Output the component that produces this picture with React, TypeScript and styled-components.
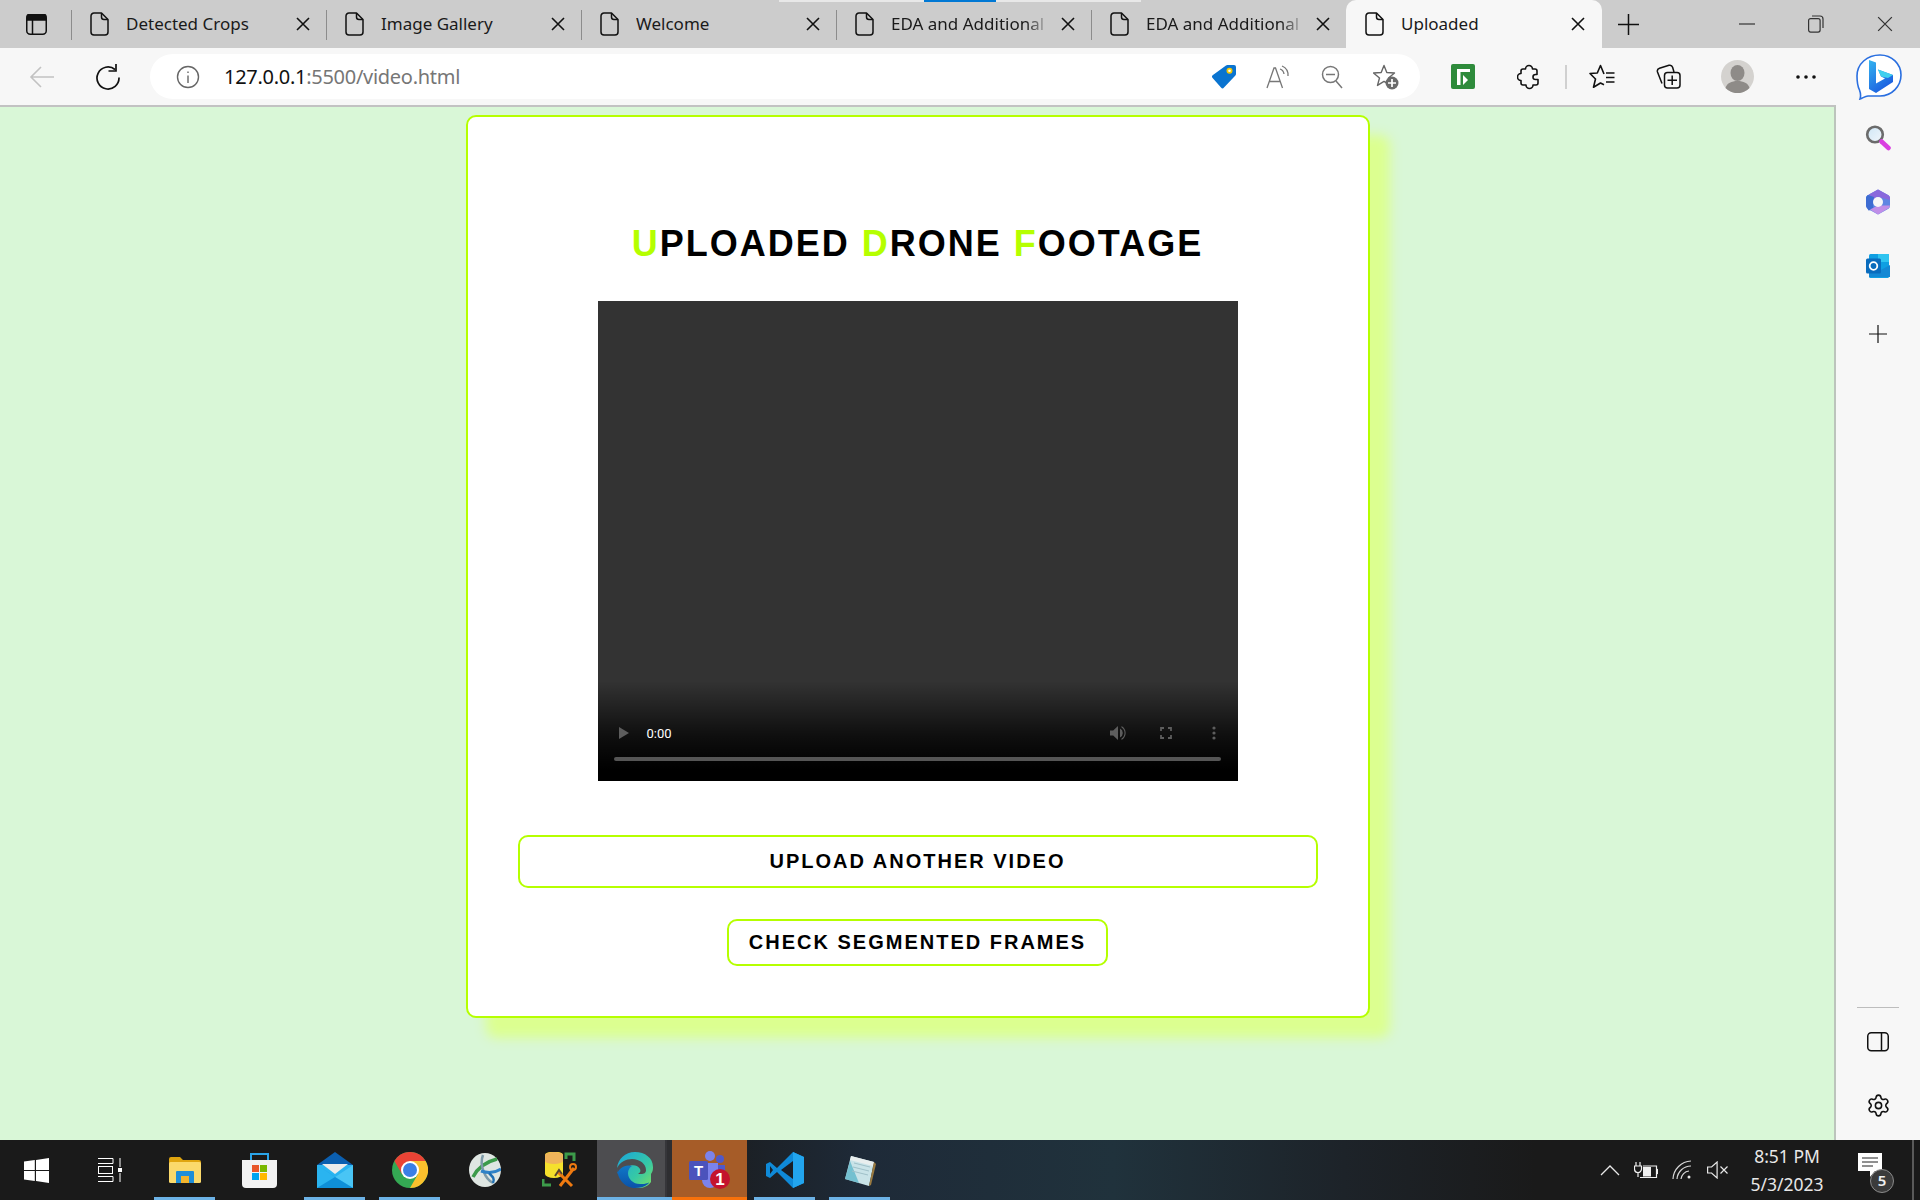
import React from "react";
import styled, { createGlobalStyle } from "styled-components";
import { Settings } from "lucide-react";

const LIME = "#b5ff00";
const UI_FONT = `"Noto Sans", "Open Sans", sans-serif`;
const PAGE_FONT = `"Liberation Sans", Arial, sans-serif`;

const Global = createGlobalStyle`
  html, body { margin: 0; padding: 0; height: 1200px; overflow: hidden; }
  * { box-sizing: border-box; }
  svg { display: block; flex: none; }
`;

const Screen = styled.div`
  position: relative;
  width: 1920px;
  height: 1200px;
  display: flex;
  flex-direction: column;
  background: #f7f7f7;
  font-family: ${UI_FONT};
`;

/* ---------- tab strip ---------- */
const TabStrip = styled.div`
  height: 48px;
  flex: none;
  display: flex;
  align-items: stretch;
  background: #cccccc;
`;
const TopGlint = styled.div`
  position: absolute;
  left: 779px;
  top: 0;
  width: 362px;
  height: 2px;
  background: #e8e8e8;
  display: flex;
  justify-content: center;
`;
const TopGlintBlue = styled.div`
  width: 72px;
  height: 2px;
  background: #0078d4;
`;
const TabMenu = styled.div`
  width: 71px;
  flex: none;
  display: flex;
  align-items: center;
  padding-left: 26px;
`;
const Tab = styled.div<{ $active?: boolean }>`
  position: relative;
  width: ${(p) => (p.$active ? 256 : 255)}px;
  flex: none;
  display: flex;
  align-items: center;
  padding: 0 15px 0 19px;
  background: ${(p) => (p.$active ? "#f7f7f7" : "transparent")};
  border-radius: ${(p) => (p.$active ? "10px 10px 0 0" : "0")};
  &::before {
    content: "";
    position: absolute;
    left: 0;
    top: 10px;
    width: 1px;
    height: 30px;
    background: ${(p) => (p.$active ? "transparent" : "#8c8c8c")};
  }
`;
const TabTitle = styled.span<{ $fade?: boolean }>`
  width: 153px;
  margin-left: 17px;
  margin-right: 17px;
  font-size: 17px;
  line-height: 24px;
  color: #1a1a1a;
  white-space: nowrap;
  overflow: hidden;
  margin-top: -1px;
  ${(p) => (p.$fade ? "mask-image: linear-gradient(to right, #000 88%, rgba(0,0,0,.25) 100%);" : "")}
`;
const PlusSlot = styled.div`
  width: 52px;
  flex: none;
  display: flex;
  align-items: center;
  justify-content: center;
`;
const WindowControls = styled.div`
  margin-left: auto;
  padding-right: 1px;
  display: flex;
`;
const WindowButton = styled.div`
  width: 69px;
  display: flex;
  align-items: center;
  justify-content: center;
`;

/* ---------- toolbar ---------- */
const Toolbar = styled.div`
  height: 57px;
  flex: none;
  display: flex;
  align-items: center;
  padding-left: 9px;
  background: #f7f7f7;
`;
const ToolSlot = styled.div<{ $w?: number }>`
  width: ${(p) => p.$w ?? 66}px;
  height: 45px;
  flex: none;
  display: flex;
  align-items: center;
  justify-content: center;
`;
const AddressBar = styled.div`
  width: 1270px;
  height: 45px;
  margin: 0 10px 0 9px;
  flex: none;
  display: flex;
  align-items: center;
  padding: 0 7px 0 16px;
  background: #ffffff;
  border-radius: 23px;
`;
const Url = styled.div`
  flex: 1;
  margin-left: 14px;
  font-size: 20px;
  letter-spacing: -0.28px;
  color: #767676;
`;
const UrlHost = styled.span`
  color: #111111;
`;
const ToolDivider = styled.div`
  width: 2px;
  height: 24px;
  background: #d0d0d0;
`;

/* ---------- page ---------- */
const Body = styled.div`
  flex: 1;
  display: flex;
  min-height: 0;
`;
const Page = styled.main`
  width: 1836px;
  flex: none;
  padding: 8px 0 0 1px;
  display: flex;
  justify-content: center;
  align-items: flex-start;
  background: #d9f7d7;
  border-top: 2px solid #c2c2c2;
  border-right: 2px solid #bcc4bc;
`;
const Card = styled.section`
  width: 904px;
  height: 903px;
  display: flex;
  flex-direction: column;
  align-items: center;
  padding-top: 106px;
  background: #ffffff;
  border: 2px solid ${LIME};
  border-radius: 10px;
  box-shadow: 20px 20px 12px #dcff90;
  font-family: ${PAGE_FONT};
`;
const Title = styled.h1`
  margin: 0 0 36px;
  font-size: 36px;
  line-height: 42px;
  font-weight: 700;
  letter-spacing: 2px;
  color: #000000;
`;
const Initial = styled.span`
  color: ${LIME};
`;
const Video = styled.div`
  width: 640px;
  height: 480px;
  flex: none;
  display: flex;
  flex-direction: column;
  justify-content: flex-end;
  background: #333333;
`;
const VideoPanel = styled.div`
  height: 100px;
  display: flex;
  flex-direction: column;
  justify-content: flex-end;
  padding: 0 17px 20px 16px;
  background: linear-gradient(to bottom, rgba(0, 0, 0, 0), rgba(0, 0, 0, 0.72) 55%, #000 88%);
`;
const VideoRow = styled.div`
  display: flex;
  align-items: center;
  height: 24px;
  margin: 0 -17px 12px 0;
  padding-left: 5px;
`;
const VideoTime = styled.span`
  margin-left: 18px;
  font-family: Roboto, ${PAGE_FONT};
  font-size: 13px;
  color: #ffffff;
`;
const VideoRight = styled.div`
  margin-left: auto;
  display: flex;
  align-items: center;
`;
const VideoSlot = styled.div`
  width: 48px;
  display: flex;
  justify-content: center;
`;
const VideoProgress = styled.div`
  height: 4px;
  border-radius: 2px;
  background: #555555;
`;
const ActionButton = styled.button<{ $wide?: boolean }>`
  width: ${(p) => (p.$wide ? 800 : 381)}px;
  height: ${(p) => (p.$wide ? 53 : 47)}px;
  margin-top: ${(p) => (p.$wide ? 54 : 31)}px;
  flex: none;
  padding: 0;
  background: #ffffff;
  border: 2px solid ${LIME};
  border-radius: 10px;
  font-family: ${PAGE_FONT};
  font-size: 20px;
  font-weight: 700;
  letter-spacing: 2px;
  color: #000000;
`;

/* ---------- sidebar ---------- */
const Sidebar = styled.aside`
  width: 84px;
  flex: none;
  display: flex;
  flex-direction: column;
  padding: 1px 0 3px;
  background: #f7f7f7;
`;
const SideSlot = styled.div<{ $h?: number }>`
  height: ${(p) => p.$h ?? 64}px;
  flex: none;
  display: flex;
  align-items: center;
  justify-content: center;
`;
const SideDivider = styled.div`
  height: 1px;
  margin: auto 21px 2px 21px;
  background: #bdbdbd;
`;

/* ---------- taskbar ---------- */
const Taskbar = styled.footer`
  height: 60px;
  flex: none;
  display: flex;
  align-items: stretch;
  background: linear-gradient(to right, #1a1a1a 0%, #1a1a1a 35%, #1e2a38 45%, #20323c 58%, #1d2329 70%, #1a1a1a 80%);
`;
const TaskSlot = styled.div<{ $w?: number; $mark?: string; $bg?: string; $full?: boolean }>`
  position: relative;
  width: ${(p) => p.$w ?? 75}px;
  flex: none;
  display: flex;
  align-items: center;
  justify-content: center;
  background: ${(p) => p.$bg ?? "transparent"};
  &::after {
    content: "";
    display: ${(p) => (p.$mark ? "block" : "none")};
    position: absolute;
    bottom: 0;
    left: ${(p) => (p.$full ? 0 : 7)}px;
    right: ${(p) => (p.$full ? 0 : 7)}px;
    height: 3px;
    background: ${(p) => p.$mark};
  }
`;
const Tray = styled.div`
  margin-left: auto;
  display: flex;
  align-items: stretch;
`;
const TraySlot = styled.div<{ $w: number }>`
  width: ${(p) => p.$w}px;
  display: flex;
  align-items: center;
  justify-content: center;
`;
const Clock = styled.div`
  width: 100px;
  display: flex;
  flex-direction: column;
  align-items: center;
  justify-content: center;
  gap: 6px;
  margin-left: 3px;
  font-size: 17.5px;
  line-height: 22px;
  color: #e8e8e8;
`;
const NotifySlot = styled.div`
  position: relative;
  width: 77px;
  height: 60px;
  margin-right: 6px;
  padding: 0 0 10px 21px;
  display: flex;
  align-items: center;
  border-right: 2px solid #5a5a5a;
`;
const NotifyBadge = styled.span`
  position: absolute;
  left: 33px;
  top: 29px;
  width: 24px;
  height: 24px;
  border-radius: 50%;
  background: #3b3b3b;
  border: 1px solid #8a8a8a;
  color: #f0f0f0;
  font-size: 15px;
  font-weight: 600;
  line-height: 21px;
  text-align: center;
`;

/* ---------- drawings ---------- */
const FileIcon = () => (
  <svg width="19" height="24" viewBox="0 0 19 24" fill="none" stroke="#111" strokeWidth="1.5" strokeLinejoin="round">
    <path d="M4 1h7.5L18 7.5V20a3 3 0 0 1-3 3H4a3 3 0 0 1-3-3V4a3 3 0 0 1 3-3z" />
    <path d="M11.5 1v4a2.5 2.5 0 0 0 2.5 2.5h4" />
  </svg>
);
const CloseIcon = ({ s = 14, c = "#111", w = 1.6 }: { s?: number; c?: string; w?: number }) => (
  <svg width={s} height={s} viewBox="0 0 14 14" stroke={c} strokeWidth={w}>
    <path d="M1 1l12 12M13 1L1 13" />
  </svg>
);
const TabsMenuIcon = () => (
  <svg width="21" height="21" viewBox="0 0 21 21" fill="none" stroke="#111" strokeWidth="1.5">
    <rect x="0.75" y="0.75" width="19.5" height="19.5" rx="3.5" />
    <path d="M1 2.5a2 2 0 0 1 2-2h15a2 2 0 0 1 2 2V6H1z" fill="#111" />
    <path d="M6.5 6v14" />
  </svg>
);
const PlusIcon = ({ s = 21, w = 1.5 }: { s?: number; w?: number }) => (
  <svg width={s} height={s} viewBox="0 0 21 21" stroke="#111" strokeWidth={w}>
    <path d="M10.5 0v21M0 10.5h21" />
  </svg>
);
const BackIcon = () => (
  <svg width="26" height="24" viewBox="0 0 26 24" fill="none" stroke="#c2c2c2" strokeWidth="1.6">
    <path d="M25 12H2M12 2L2 12l10 10" />
  </svg>
);
const ReloadIcon = () => (
  <svg width="26" height="26" viewBox="0 0 26 26" fill="none" stroke="#111" strokeWidth="1.7">
    <path d="M20 5.5a11 11 0 1 0 4 8" />
    <path d="M13.5 6h7.5V-1" transform="translate(0 1)" />
  </svg>
);
const InfoIcon = () => (
  <svg width="24" height="24" viewBox="0 0 24 24" fill="none" stroke="#666" strokeWidth="1.4">
    <circle cx="12" cy="12" r="10.5" />
    <path d="M12 10.5V18M12 6.5v1.6" />
  </svg>
);
const TagIcon = () => (
  <svg width="26" height="25" viewBox="0 0 26 25">
    <path d="M15 1.5a2 2 0 0 1 1.4-.5H23a2 2 0 0 1 2 2v7a2 2 0 0 1-.6 1.4L13 23.6a2 2 0 0 1-3 0L1.6 14a2 2 0 0 1 0-2.8z" fill="#0a74d0" />
    <circle cx="18.5" cy="6.8" r="3" fill="#f6c800" />
    <circle cx="18.5" cy="6.8" r="1.3" fill="#fff" />
  </svg>
);
const ReadIcon = () => (
  <svg width="24" height="24" viewBox="0 0 24 24" fill="none" stroke="#777" strokeWidth="1.3">
    <path d="M1 23L8 3h1.5l7 20M3.5 16.5h10.5" />
    <path d="M14 4a6 6 0 0 1 4 5M16 1a10 10 0 0 1 6 10" />
  </svg>
);
const ZoomOutIcon = () => (
  <svg width="22" height="24" viewBox="0 0 22 24" fill="none" stroke="#777" strokeWidth="1.5">
    <circle cx="9.5" cy="9.5" r="8" />
    <path d="M5 9.5h9M15 16l6 7" />
  </svg>
);
const StarAddIcon = () => (
  <svg width="26" height="26" viewBox="0 0 26 26" fill="none">
    <path d="M11 1.5l2.8 7 7.7.5-6 5 2 7.4-6.5-4-6.5 4 2-7.4-6-5 7.7-.5z" stroke="#666" strokeWidth="1.4" strokeLinejoin="round" />
    <circle cx="19" cy="19" r="6.5" fill="#6a6a6a" />
    <path d="M19 15v8M15 19h8" stroke="#fff" strokeWidth="1.7" />
  </svg>
);
const GreenExtIcon = () => (
  <svg width="24" height="25" viewBox="0 0 24 25">
    <rect width="24" height="25" rx="2" fill="#2e8b3b" />
    <path d="M6 21V5h13v3H9.5v13z" fill="#fff" />
    <path d="M12 11l5 5-5 5z" fill="#fff" />
  </svg>
);
const PuzzleIcon = () => (
  <svg width="24" height="26" viewBox="0 0 24 26" fill="none" stroke="#111" strokeWidth="1.6" strokeLinejoin="round">
    <path d="M6 5h2.500a3.500 3.500 0 0 1 7 0H18a2 2 0 0 1 2 2v3.500h-1.500a2.500 2.500 0 0 0 0 5H21V19a2 2 0 0 1-2 2h-3a3.500 3.500 0 0 1-7 0H6a2 2 0 0 1-2-2v-2.500a3.500 3.500 0 0 1 0-7V7a2 2 0 0 1 2-2z" />
  </svg>
);
const FavoritesIcon = () => (
  <svg width="26" height="25" viewBox="0 0 26 25" fill="none" stroke="#111" strokeWidth="1.6" strokeLinejoin="round">
    <path d="M15 10L11.500 1.500 8.300 9 1 9.500 6.500 15l-2 8.300 7-4.300 3.500 1.800" />
    <path d="M17 9h8.500M17 13.500h8.500M17 18h8.500" />
  </svg>
);
const CollectionsIcon = () => (
  <svg width="25" height="25" viewBox="0 0 25 25" fill="none" stroke="#111" strokeWidth="1.5">
    <path d="M6 19.500L1.500 8a3 3 0 0 1 2-3.700L13 1.300a3 3 0 0 1 3.600 2L18 8" />
    <rect x="8.500" y="8.500" width="15.500" height="15.500" rx="3" />
    <path d="M16.200 11.500v9.500M11.500 16.200H21" />
  </svg>
);
const ProfileIcon = () => (
  <svg width="33" height="33" viewBox="0 0 33 33">
    <circle cx="16.5" cy="16.5" r="16.5" fill="#d4d2cf" />
    <ellipse cx="16.5" cy="13" rx="7" ry="8" fill="#8e8b88" />
    <path d="M4.5 28c1.5-5 6-7 12-7s10.500 2 12 7a16.500 16.500 0 0 1-24 0z" fill="#8e8b88" />
  </svg>
);
const DotsIcon = () => (
  <svg width="20" height="4" viewBox="0 0 20 4" fill="#111">
    <circle cx="2" cy="2" r="1.8" />
    <circle cx="10" cy="2" r="1.8" />
    <circle cx="18" cy="2" r="1.8" />
  </svg>
);
const BingIcon = () => (
  <svg width="46" height="46" viewBox="0 0 46 46">
    <defs>
      <linearGradient id="bingB" x1="0" y1="0" x2="0.6" y2="1">
        <stop offset="0" stopColor="#34b4ef" />
        <stop offset="1" stopColor="#1a5be0" />
      </linearGradient>
    </defs>
    <path d="M24 1c12 0 21 9 21 20s-9 21-21 21H12c-3 0-5 2-8 3 1-3 1-5-.5-9C1.500 32 1 27 1 22 1 10 11 1 24 1z" fill="#fff" stroke="#2a6fe0" strokeWidth="1.6" />
    <path d="M13 6l7 2.500v21l9-5-4-2-3-7 15 5.500v7L20 39l-7-4z" fill="url(#bingB)" />
    <path d="M22 15.500l15 5.500-5 3-7-1.500z" fill="#3fd0ee" />
  </svg>
);
const SearchSideIcon = () => (
  <svg width="26" height="26" viewBox="0 0 26 26">
    <defs>
      <linearGradient id="lens" x1="0" y1="0" x2="1" y2="1">
        <stop offset="0" stopColor="#cfe6f6" />
        <stop offset="1" stopColor="#f2f7fb" />
      </linearGradient>
    </defs>
    <circle cx="10" cy="9.500" r="7.800" fill="url(#lens)" stroke="#6b6b6b" strokeWidth="2.600" />
    <path d="M16.500 16.500l7 6.500" stroke="#d93ee0" strokeWidth="4.500" strokeLinecap="round" />
  </svg>
);
const CopilotIcon = () => (
  <svg width="24" height="26" viewBox="0 0 24 26">
    <path d="M12 0.500l10 5.500c1 .6 2 1.500 2 3v8c0 1.500-1 2.400-2 3l-10 5.500-10-5.500c-1-.6-2-1.500-2-3V9c0-1.500 1-2.400 2-3z" fill="#5f86e2" />
    <path d="M12 0.500l10 5.500c1 .6 2 1.500 2 3v2L12 8 7 11 3 5.500z" fill="#8a68dc" />
    <path d="M0 9c0-1.500 1-2.400 2-3l6 2-1 9 1 3.500-5.500 1L0 17z" fill="#3d6cd2" />
    <path d="M4 20.500l8-4 12 0c0 1.500-1 2.300-2 3l-10 6z" fill="#c08fe8" />
    <circle cx="12" cy="13" r="5" fill="#f7f7f7" />
  </svg>
);
const OutlookIcon = () => (
  <svg width="24" height="24" viewBox="0 0 24 24">
    <rect x="3" y="0" width="20" height="24" rx="1.500" fill="#0f9fe2" />
    <rect x="12" y="0" width="11" height="8" fill="#2fc4f0" />
    <path d="M3 12l10 5 11-6v12H3z" fill="#1488d4" />
    <rect x="0" y="4.500" width="15" height="15" rx="1.500" fill="#0a6cbd" />
    <circle cx="7.500" cy="12" r="3.800" fill="none" stroke="#fff" strokeWidth="1.800" />
  </svg>
);
const PanelIcon = () => (
  <svg width="22" height="20" viewBox="0 0 22 20" fill="none" stroke="#111" strokeWidth="1.500">
    <rect x="0.750" y="0.750" width="20.500" height="18" rx="3.500" />
    <path d="M14.500 1v18" />
  </svg>
);
const WinLogo = () => (
  <svg width="25" height="25" viewBox="0 0 25 25" fill="#fff">
    <path d="M0 3.600l10.800-1.500v9.900H0zM12 1.900L25 0v12H12zM0 13h10.800v9.900L0 21.400zM12 13h13v12l-13-1.900z" />
  </svg>
);
const TaskViewIcon = () => (
  <svg width="24" height="24" viewBox="0 0 24 24" fill="none" stroke="#fff" strokeWidth="1">
    <path d="M0 0.500h15v5H0M0 23.500h15v-5H0" />
    <rect x="0.500" y="8.500" width="14" height="7" />
    <path d="M22 0v9M22 15v9" />
    <rect x="20" y="10" width="4" height="4" fill="#fff" stroke="none" />
  </svg>
);
const ExplorerIcon = () => (
  <svg width="32" height="26" viewBox="0 0 32 26">
    <path d="M0 2a2 2 0 0 1 2-2h9l3 3h16a2 2 0 0 1 2 2v3H0z" fill="#e0a50f" />
    <rect x="0" y="5" width="32" height="21" rx="1.500" fill="#fbd96b" />
    <path d="M7 26V15a1 1 0 0 1 1-1h16a1 1 0 0 1 1 1v11h-5v-7h-8v7z" fill="#1f8ed8" />
    <rect x="12" y="19" width="8" height="7" fill="#f3b42c" />
  </svg>
);
const StoreIcon = () => (
  <svg width="35" height="36" viewBox="0 0 35 36">
    <path d="M9 8V2h17v6" fill="none" stroke="#2aa4e8" strokeWidth="2" />
    <path d="M0 8h35v24a4 4 0 0 1-4 4H4a4 4 0 0 1-4-4z" fill="#f2f2f2" />
    <rect x="10" y="13" width="7" height="7" fill="#e8562a" />
    <rect x="18" y="13" width="7" height="7" fill="#7ab800" />
    <rect x="10" y="21" width="7" height="7" fill="#00a4ef" />
    <rect x="18" y="21" width="7" height="7" fill="#ffb900" />
  </svg>
);
const MailIcon = () => (
  <svg width="36" height="36" viewBox="0 0 36 36">
    <path d="M18 0l18 13H0z" fill="#0b5fb0" />
    <path d="M0 13h36v23H0z" fill="#2ab4f0" />
    <path d="M5 12h26L18 22z" fill="#ececec" />
    <path d="M0 13l18 12 18-12v23z" fill="#1fa6ea" />
    <path d="M18 25l18 11V13z" fill="#49c5f5" />
    <path d="M0 36l18-11 18 11z" fill="#0f8fd8" />
  </svg>
);
const ChromeIcon = () => (
  <svg width="36" height="36" viewBox="0 0 36 36">
    <circle cx="18" cy="18" r="18" fill="#34a853" />
    <path d="M2.400 9A18 18 0 0 1 33.600 9H18L10.200 22.500z" fill="#ea4335" />
    <path d="M33.600 9A18 18 0 0 1 18 36l7.800-13.500L18 9z" fill="#fbc02d" />
    <circle cx="18" cy="18" r="9" fill="#fff" />
    <circle cx="18" cy="18" r="7" fill="#3b7fe6" />
  </svg>
);
const GlobeIcon = () => (
  <svg width="32" height="34" viewBox="0 0 32 34" fill="none">
    <ellipse cx="16" cy="17" rx="16" ry="17" fill="#dfe6e2" />
    <path d="M4 24C10 12 20 8 28 6" stroke="#3c9b4a" strokeWidth="3.500" />
    <path d="M14 2c-4 10 2 24 10 28" stroke="#7d9aa8" strokeWidth="2.500" />
    <path d="M12 18c6 2 14 2 20-2" stroke="#2f82c7" strokeWidth="3" />
    <path d="M20 20c4 4 6 6 4 10" stroke="#1f6fb3" strokeWidth="2.500" />
  </svg>
);
const ToolsIcon = () => (
  <svg width="36" height="36" viewBox="0 0 36 36" fill="none">
    <path d="M3 3a8 3 0 0 1 18 0v19a9 4 0 0 1-18 0z" fill="#f5e02c" />
    <path d="M3 3a9 3 0 0 1 18 0v6a9 3 0 0 1-18 0z" fill="#efb45a" />
    <path d="M24 7V2h8v7" stroke="#3c9b4a" strokeWidth="3" />
    <path d="M1 27v6h8" stroke="#3c9b4a" strokeWidth="3" />
    <path d="M16 20l14 14M32 16L18 34" stroke="#ef7a10" strokeWidth="3" />
    <path d="M13 24l4-6 3 4" stroke="#5a4630" strokeWidth="2" />
    <circle cx="31" cy="15" r="3" stroke="#ef7a10" strokeWidth="2" />
  </svg>
);
const EdgeIcon = () => (
  <svg width="36" height="36" viewBox="0 0 36 36">
    <defs>
      <linearGradient id="edgeTop" x1="0" y1="0" x2="1" y2="1">
        <stop offset="0" stopColor="#1aa5dc" />
        <stop offset="0.6" stopColor="#36c9a5" />
        <stop offset="1" stopColor="#7fe05f" />
      </linearGradient>
      <linearGradient id="edgeLow" x1="0" y1="0" x2="0" y2="1">
        <stop offset="0" stopColor="#0f78c8" />
        <stop offset="1" stopColor="#0b52a8" />
      </linearGradient>
    </defs>
    <path d="M18 0C8 0 1 7 0 16c3-6 9-9 15-9 8 0 14 5 14 11 0 3-2 4-5 4h-3c2-1 3-3 2-5-2-4-8-5-13-2C6 18 4 24 7 29c3 5 9 7 14 7 6 0 10-2 13-6V22c2-3 2-5 2-7C36 6 28 0 18 0z" fill="url(#edgeTop)" />
    <path d="M0 16c0 10 7 20 18 20 5 0 9-1 13-4 1-1 1-2 0-1-3 1-5 1-8 1-7 0-12-5-12-11 0-3 2-6 4-7C8 12 2 16 0 22z" fill="url(#edgeLow)" />
  </svg>
);
const TeamsIcon = () => (
  <svg width="42" height="38" viewBox="0 0 42 38">
    <circle cx="21" cy="5" r="5" fill="#7b83eb" />
    <circle cx="31" cy="8" r="4" fill="#5059c9" />
    <path d="M27 14h9v13a5 5 0 0 1-9 0z" fill="#5059c9" />
    <path d="M13 12h16v17a8 8 0 0 1-16 0z" fill="#7b83eb" />
    <rect x="0" y="10" width="19" height="19" rx="1.500" fill="#4b53bc" />
    <text x="9.500" y="25" textAnchor="middle" fontFamily={PAGE_FONT} fontSize="15" fontWeight="700" fill="#fff">T</text>
    <ellipse cx="31" cy="28" rx="10" ry="10" fill="#c4132d" />
    <text x="31" y="34" textAnchor="middle" fontFamily={PAGE_FONT} fontSize="17" fontWeight="700" fill="#fff">1</text>
  </svg>
);
const VSCodeIcon = () => (
  <svg width="38" height="36" viewBox="0 0 38 36">
    <path d="M27 0l11 5v26l-11 5L11 20l-7 6-4-2V12l4-2 7 6z" fill="#0f8ad8" />
    <path d="M27 0l11 5v26l-11 5z" fill="#22a5ee" />
    <path d="M27 9L15 18l12 9z" fill="#1a1f26" />
    <path d="M4 14l3 4-3 4z" fill="#1a1f26" />
  </svg>
);
const NotepadIcon = () => (
  <svg width="32" height="31" viewBox="0 0 32 31">
    <path d="M7 1l23 6-5 24-24-7z" fill="#c9e3e8" />
    <path d="M7 1l23 6-1 4L6 5z" fill="#e8eeee" />
    <path d="M6 6L1 24l14 4z" fill="#5fb6c9" opacity="0.8" />
    <path d="M30 7l2 2-5 21-2 1z" fill="#9a7a40" />
    <path d="M10 8l16 4M9 12l16 4M8 16l16 4" stroke="#9fc0c8" strokeWidth="1" />
  </svg>
);
const ChevronIcon = () => (
  <svg width="20" height="11" viewBox="0 0 20 11" fill="none" stroke="#e8e8e8" strokeWidth="1.300">
    <path d="M1 10l9-9 9 9" />
  </svg>
);
const BatteryIcon = () => (
  <svg width="24" height="17" viewBox="0 0 24 17" fill="none" stroke="#f0f0f0" strokeWidth="1.200">
    <path d="M2 0v4M6 0v4M0.500 4h7v3a3 3 0 0 1-7 0zM4 10v5" />
    <path d="M6 15.500h16.500V4H9" />
    <rect x="23" y="7.500" width="1" height="4" fill="#f0f0f0" />
    <rect x="9" y="5" width="8" height="9.500" fill="#f0f0f0" stroke="none" />
  </svg>
);
const WifiIcon = () => (
  <svg width="20" height="20" viewBox="0 0 20 20" fill="none" stroke="#d8d8d8" strokeWidth="1.200">
    <path d="M1 19A19 19 0 0 1 19 1" />
    <path d="M5 19A14 14 0 0 1 19 6" />
    <path d="M9 19A9 9 0 0 1 17 11" />
    <circle cx="17" cy="17" r="1.500" fill="#e8e8e8" stroke="none" />
  </svg>
);
const MuteIcon = () => (
  <svg width="21" height="18" viewBox="0 0 21 18" fill="none" stroke="#e8e8e8" strokeWidth="1.200">
    <path d="M0.600 6v6h4l5.500 5V1L4.600 6z" />
    <path d="M13.500 5.500l7 7M20.500 5.500l-7 7" />
  </svg>
);
const NotifyIcon = () => (
  <svg width="24" height="24" viewBox="0 0 24 24">
    <path d="M0 0h24v18h-7l-5 6v-6H0z" fill="#fff" />
    <path d="M4 5h16M4 9h16M4 13h11" stroke="#222" strokeWidth="1" />
  </svg>
);
const PlayGlyph = () => (
  <svg width="10" height="12" viewBox="0 0 10 12" fill="#5d5d5d">
    <path d="M0 0l10 6-10 6z" />
  </svg>
);
const VolumeGlyph = () => (
  <svg width="16" height="16" viewBox="0 0 16 16" fill="#5d5d5d">
    <path d="M0 5.500v5h3.200L8 15V1L3.200 5.500z" />
    <path d="M10 3.500a5 5 0 0 1 0 9zM11.500 1a8 8 0 0 1 0 14v-1.500a6.500 6.500 0 0 0 0-11z" />
  </svg>
);
const FullscreenGlyph = () => (
  <svg width="12" height="12" viewBox="0 0 12 12" fill="none" stroke="#5d5d5d" strokeWidth="1.800">
    <path d="M1 4V1h3M8 1h3v3M11 8v3H8M4 11H1V8" />
  </svg>
);
const MoreGlyph = () => (
  <svg width="4" height="14" viewBox="0 0 4 14" fill="#5d5d5d">
    <circle cx="2" cy="2" r="1.600" />
    <circle cx="2" cy="7" r="1.600" />
    <circle cx="2" cy="12" r="1.600" />
  </svg>
);

const tabs = [
  { title: "Detected Crops" },
  { title: "Image Gallery" },
  { title: "Welcome" },
  { title: "EDA and Additional", fade: true },
  { title: "EDA and Additional", fade: true },
];

export default function App() {
  return (
    <Screen>
      <Global />
      <TabStrip>
        <TabMenu>
          <TabsMenuIcon />
        </TabMenu>
        {tabs.map((t, i) => (
          <Tab key={i}>
            <FileIcon />
            <TabTitle $fade={t.fade}>{t.title}</TabTitle>
            <CloseIcon />
          </Tab>
        ))}
        <Tab $active>
          <FileIcon />
          <TabTitle>Uploaded</TabTitle>
          <CloseIcon />
        </Tab>
        <PlusSlot>
          <PlusIcon />
        </PlusSlot>
        <WindowControls>
          <WindowButton>
            <svg width="16" height="2" viewBox="0 0 16 2" stroke="#333" strokeWidth="1.200">
              <path d="M0 1h16" />
            </svg>
          </WindowButton>
          <WindowButton>
            <svg width="16" height="18" viewBox="0 0 16 18" fill="none" stroke="#333" strokeWidth="1.200">
              <rect x="0.600" y="3.600" width="11.500" height="13.500" rx="2" />
              <path d="M4 1h8a3 3 0 0 1 3 3v9" />
            </svg>
          </WindowButton>
          <WindowButton>
            <CloseIcon s={16} c="#333" w={1.1} />
          </WindowButton>
        </WindowControls>
      </TabStrip>
      <TopGlint>
        <TopGlintBlue />
      </TopGlint>

      <Toolbar>
        <ToolSlot><BackIcon /></ToolSlot>
        <ToolSlot><ReloadIcon /></ToolSlot>
        <AddressBar>
          <ToolSlot $w={44}><InfoIcon /></ToolSlot>
          <Url>
            <UrlHost>127.0.0.1</UrlHost>:5500/video.html
          </Url>
          <ToolSlot $w={54}><TagIcon /></ToolSlot>
          <ToolSlot $w={54}><ReadIcon /></ToolSlot>
          <ToolSlot $w={54}><ZoomOutIcon /></ToolSlot>
          <ToolSlot $w={54}><StarAddIcon /></ToolSlot>
        </AddressBar>
        <ToolSlot><GreenExtIcon /></ToolSlot>
        <ToolSlot><PuzzleIcon /></ToolSlot>
        <ToolSlot $w={7}><ToolDivider /></ToolSlot>
        <ToolSlot><FavoritesIcon /></ToolSlot>
        <ToolSlot><CollectionsIcon /></ToolSlot>
        <ToolSlot $w={72}><ProfileIcon /></ToolSlot>
        <ToolSlot><DotsIcon /></ToolSlot>
        <ToolSlot $w={80}><BingIcon /></ToolSlot>
      </Toolbar>

      <Body>
        <Page>
          <Card>
            <Title>
              <Initial>U</Initial>PLOADED <Initial>D</Initial>RONE <Initial>F</Initial>OOTAGE
            </Title>
            <Video>
              <VideoPanel>
                <VideoRow>
                  <PlayGlyph />
                  <VideoTime>0:00</VideoTime>
                  <VideoRight>
                    <VideoSlot><VolumeGlyph /></VideoSlot>
                    <VideoSlot><FullscreenGlyph /></VideoSlot>
                    <VideoSlot><MoreGlyph /></VideoSlot>
                  </VideoRight>
                </VideoRow>
                <VideoProgress />
              </VideoPanel>
            </Video>
            <ActionButton $wide>UPLOAD ANOTHER VIDEO</ActionButton>
            <ActionButton>CHECK SEGMENTED FRAMES</ActionButton>
          </Card>
        </Page>
        <Sidebar>
          <SideSlot><SearchSideIcon /></SideSlot>
          <SideSlot><CopilotIcon /></SideSlot>
          <SideSlot><OutlookIcon /></SideSlot>
          <SideSlot $h={72}><PlusIcon s={18} w={1.4} /></SideSlot>
          <SideDivider />
          <SideSlot $h={63}><PanelIcon /></SideSlot>
          <SideSlot><Settings size={25} strokeWidth={1.5} color="#111" /></SideSlot>
        </Sidebar>
      </Body>

      <Taskbar>
        <TaskSlot $w={72}><WinLogo /></TaskSlot>
        <TaskSlot><TaskViewIcon /></TaskSlot>
        <TaskSlot $mark="#6cb2e6"><ExplorerIcon /></TaskSlot>
        <TaskSlot><StoreIcon /></TaskSlot>
        <TaskSlot $mark="#6cb2e6"><MailIcon /></TaskSlot>
        <TaskSlot $mark="#6cb2e6"><ChromeIcon /></TaskSlot>
        <TaskSlot><GlobeIcon /></TaskSlot>
        <TaskSlot><ToolsIcon /></TaskSlot>
        <TaskSlot $bg="linear-gradient(to right, #4d4d50 0 68px, #36363a 68px 70px, #2e2e31 70px)" $mark="#6cb2e6" $full><EdgeIcon /></TaskSlot>
        <TaskSlot $bg="#a65c28" $mark="#f7710b" $full><TeamsIcon /></TaskSlot>
        <TaskSlot $mark="#6cb2e6"><VSCodeIcon /></TaskSlot>
        <TaskSlot $mark="#6cb2e6"><NotepadIcon /></TaskSlot>
        <Tray>
          <TraySlot $w={36}><ChevronIcon /></TraySlot>
          <TraySlot $w={36}><BatteryIcon /></TraySlot>
          <TraySlot $w={36}><WifiIcon /></TraySlot>
          <TraySlot $w={34}><MuteIcon /></TraySlot>
          <Clock>
            <span>8:51 PM</span>
            <span>5/3/2023</span>
          </Clock>
          <NotifySlot>
            <NotifyIcon />
            <NotifyBadge>5</NotifyBadge>
          </NotifySlot>
        </Tray>
      </Taskbar>
    </Screen>
  );
}
